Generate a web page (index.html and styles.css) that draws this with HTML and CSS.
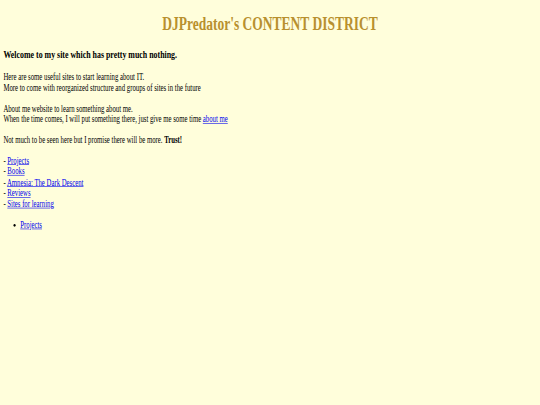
FILE: index.html
```html
<!DOCTYPE html>
<html>
<head>
<meta charset="utf-8">
<link rel="stylesheet" href="styles.css">
</head>
<body>
<div class="page">
<h1 class="title">DJPredator's CONTENT DISTRICT</h1>
<h3 class="welcome">Welcome to my site which has pretty much nothing.</h3>
<p>Here are some useful sites to start learning about IT.<br>More to come with reorganized structure and groups of sites in the future</p>
<p>About me website to learn something about me.<br>When the time comes, I will put something there, just give me some time <a href="#">about me</a></p>
<p>Not much to be seen here but I promise there will be more. <b>Trust!</b></p>
<p>- <a href="#">Projects</a><br>- <a href="#">Books</a><br>- <a href="#">Amnesia: The Dark Descent</a><br>- <a href="#">Reviews</a><br>- <a href="#">Sites for learning</a></p>
<ul class="list">
<li><a href="#">Projects</a></li>
</ul>
</div>
</body>
</html>
```
FILE: styles.css
```css
html, body {
  margin: 0;
  padding: 0;
  width: 540px;
  height: 405px;
  background: #fffedb;
  overflow: hidden;
}
.page {
  width: 1280px;
  height: 678px;
  box-sizing: border-box;
  padding: 0 8px;
  font-family: "Liberation Serif", "Times New Roman", serif;
  font-size: 16px;
  line-height: 1.15;
  color: #000;
  transform: scale(0.421875, 0.597);
  transform-origin: 0 0;
  display: flow-root;
  overflow: hidden;
}
.title {
  text-align: center;
  color: #b8902e;
  font-size: 32px;
  margin: 21.44px 0;
}
.welcome {
  font-size: 18.72px;
  margin: 18.72px 0;
}
p {
  margin: 16px 0;
}
a {
  color: #0000ee;
}
.list {
  margin: 16px 0;
  padding-left: 40px;
}
```
